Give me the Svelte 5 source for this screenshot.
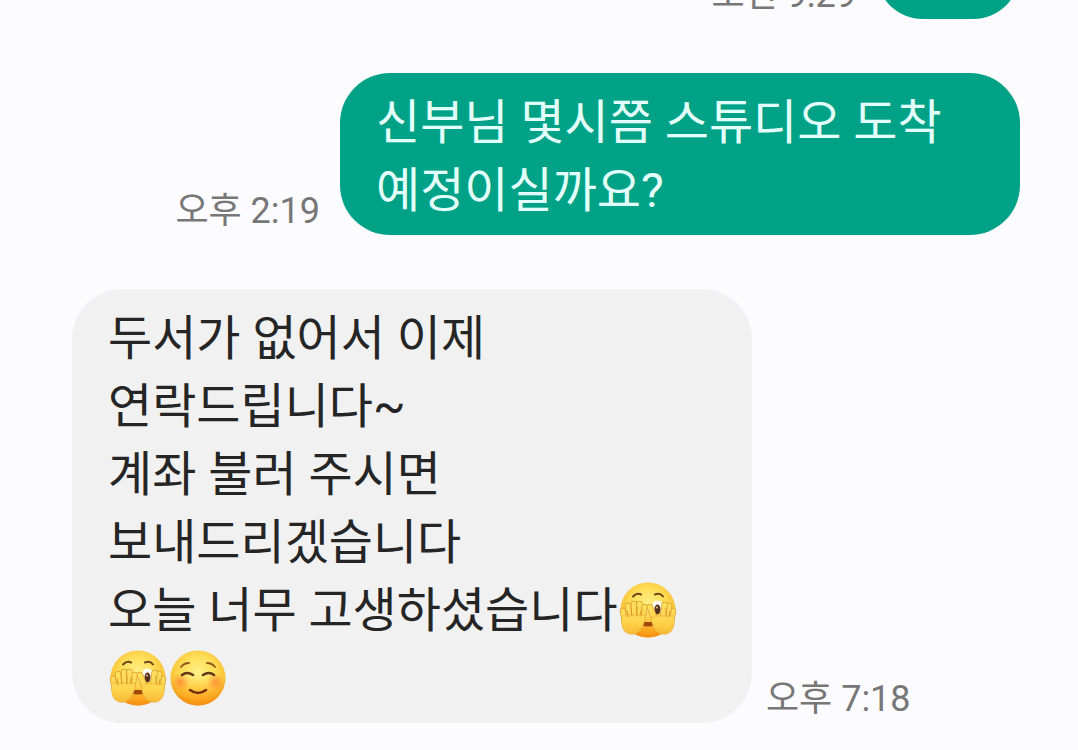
<script>
  const messages = [
    { id: 1, sent: true, time: '오전 9:29', lines: [] },
    {
      id: 2,
      sent: true,
      time: '오후 2:19',
      lines: [{ text: '신부님 몇시쯤 스튜디오 도착 예정이실까요?' }]
    },
    {
      id: 3,
      sent: false,
      time: '오후 7:18',
      lines: [
        { text: '두서가 없어서 이제 연락드립니다~' },
        { text: '계좌 불러 주시면 보내드리겠습니다' },
        { text: '오늘 너무 고생하셨습니다', emoji: ['peek', 'peek', 'smile'] }
      ]
    }
  ];
</script>

<svg class="defs" aria-hidden="true">
  <defs>
    <radialGradient id="face" cx="50%" cy="40%" r="60%">
      <stop offset="0" stop-color="#fff088" />
      <stop offset="0.5" stop-color="#ffde58" />
      <stop offset="0.82" stop-color="#fac338" />
      <stop offset="1" stop-color="#dd9a28" />
    </radialGradient>
    <linearGradient id="shade" x1="0" y1="0" x2="0" y2="1">
      <stop offset="0.5" stop-color="#ff9a10" stop-opacity="0" />
      <stop offset="1" stop-color="#ff8b0a" stop-opacity="0.75" />
    </linearGradient>
    <linearGradient id="hand" gradientUnits="userSpaceOnUse" x1="0" y1="20" x2="0" y2="54">
      <stop offset="0" stop-color="#ffe060" />
      <stop offset="0.6" stop-color="#ffd650" />
      <stop offset="1" stop-color="#f8ba35" />
    </linearGradient>
    <radialGradient id="blush">
      <stop offset="0" stop-color="#ff6a2e" stop-opacity="0.6" />
      <stop offset="1" stop-color="#ff7a30" stop-opacity="0" />
    </radialGradient>
  </defs>
</svg>

{#snippet finger(d)}
  <path {d} fill="none" stroke="#d99a2c" stroke-width="6.4" stroke-linecap="round" />
  <path {d} fill="none" stroke="url(#hand)" stroke-width="5" stroke-linecap="round" />
{/snippet}

{#snippet peek()}
  <svg class="emoji" viewBox="0 0 60 60" role="img" aria-label="🫣">
    <circle cx="30" cy="30" r="27.5" fill="url(#face)" />
    <circle cx="30" cy="30" r="27.5" fill="url(#shade)" />
    <path d="M15 16.500q4-4 8-2M37 14.500q5-2 8 2" fill="none" stroke="#6d431b" stroke-width="2" stroke-linecap="round" />
    <ellipse cx="39.5" cy="27" rx="6" ry="6.5" fill="#fffdf2" />
    <ellipse cx="39.5" cy="29.500" rx="3" ry="5" fill="#54311b" />
    <circle cx="39" cy="27.500" r="1" fill="#e7c39b" />
    <path d="M23 42h14v3q-7 3-14 0z" fill="#a2480f" />
    <!-- left hand -->
    {@render finger('M5 31L7 42')}
    {@render finger('M10 26L12 40')}
    {@render finger('M16 24L16.5 40')}
    {@render finger('M21.5 24L21 40')}
    {@render finger('M26.5 27L24 40')}
    <path d="M3.5 37c0 7 0 15 8 17 8 2 14-5 16-17l-1-2H6z" fill="url(#hand)" stroke="#e0a32f" stroke-width="0.5" />
    <path d="M9 31l1 6M13 28l1 8M19 27v9M24 30l-1 6" fill="none" stroke="#d99a2c" stroke-width="1" stroke-linecap="round" />
    <!-- right hand -->
    {@render finger('M55 31L53 42')}
    {@render finger('M51 26L49 40')}
    {@render finger('M46.5 25L45 40')}
    {@render finger('M32 27L37 40')}
    <path d="M56.500 37c0 8-1 15-8 17-8 2-14-5-15-14 0-3 2-4 5-4h17z" fill="url(#hand)" stroke="#e0a32f" stroke-width="0.5" />
    <path d="M52 31l-1 6M48 28v8" fill="none" stroke="#d99a2c" stroke-width="1" stroke-linecap="round" />
  </svg>
{/snippet}

{#snippet smile()}
  <svg class="emoji" viewBox="0 0 60 60" role="img" aria-label="☺️">
    <circle cx="30" cy="30" r="27.5" fill="url(#face)" />
    <circle cx="30" cy="30" r="27.5" fill="url(#shade)" />
    <circle cx="12.5" cy="34" r="9" fill="url(#blush)" />
    <circle cx="47.5" cy="34" r="9" fill="url(#blush)" />
    <path d="M13 19q3-4 8-4M39 15q5 0 8 4" fill="none" stroke="#91571b" stroke-width="1.8" stroke-linecap="round" />
    <path d="M14 27q5-4 11 0M35 27q6-4 11 0" fill="none" stroke="#63391a" stroke-width="2.6" stroke-linecap="round" />
    <path d="M22 42q8 6 16 0" fill="none" stroke="#742f13" stroke-width="2.6" stroke-linecap="round" />
  </svg>
{/snippet}

<main class="chat">
  {#each messages as message (message.id)}
    <div class="row" class:sent={message.sent}>
      <div class="bubble">
        {#each message.lines as line}
          <p>{line.text}{#each line.emoji ?? [] as name}{#if name === 'peek'}{@render peek()}{:else}{@render smile()}{/if}{/each}</p>
        {/each}
      </div>
      <time>{message.time}</time>
    </div>
  {/each}
</main>

<style>
  :global(body) {
    margin: 0;
    background: #fcfcff;
  }
  .defs {
    position: absolute;
    width: 0;
    height: 0;
  }
  .chat {
    box-sizing: border-box;
    height: 100vh;
    overflow: hidden;
    display: flex;
    flex-direction: column;
    justify-content: flex-end;
    gap: 54px;
    padding: 0 58px 27px 72px;
    font-family: Roboto, 'Noto Sans CJK KR', sans-serif;
  }
  .row {
    flex: none;
    display: flex;
    align-items: flex-end;
    gap: 14px;
  }
  .row.sent {
    flex-direction: row-reverse;
    gap: 20px;
  }
  .bubble {
    box-sizing: border-box;
    min-width: 144px;
    min-height: 94px;
    max-width: 680px;
    padding: 16px 36px 10px;
    border-radius: 50px;
    background: #f1f1f1;
    color: #252525;
    font-size: 48px;
    line-height: 68px;
    word-break: keep-all;
  }
  .sent .bubble {
    background: #00a287;
    color: #e2fffb;
  }
  p {
    margin: 0;
  }
  time {
    flex: none;
    color: #777;
    font-size: 36px;
    line-height: 48px;
  }
  .emoji {
    width: 60px;
    height: 60px;
    vertical-align: -13px;
  }
</style>
